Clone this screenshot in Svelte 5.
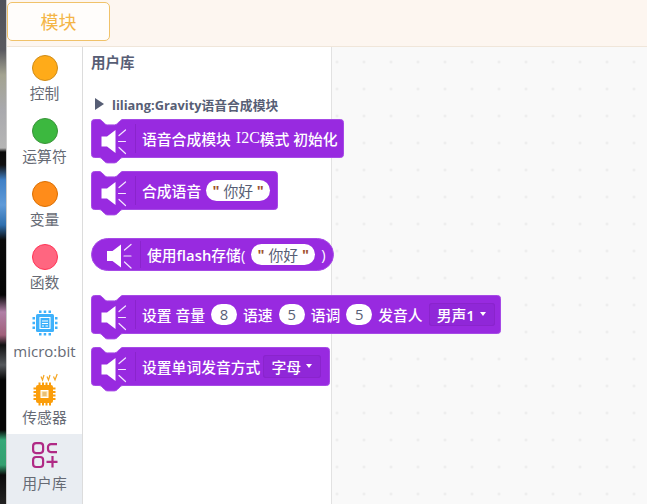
<script>
  // hat-less statement block outline, scratch style notch on top and bump under
  function stack(w, h) {
    const notch = 'c1.5,0 2.2,.7 3,1.4 l2.6,2.6 c.8,.8 1.5,1.4 3,1.4 h6.8 c1.5,0 2.2,-.6 3,-1.4 l2.6,-2.6 c.8,-.7 1.5,-1.4 3,-1.4';
    const bump = 'c-1.5,0 -2.2,.7 -3,1.4 l-2.6,2.6 c-.8,.8 -1.5,1.4 -3,1.4 h-6.8 c-1.5,0 -2.2,-.6 -3,-1.4 l-2.6,-2.6 c-.8,-.7 -1.5,-1.4 -3,-1.4';
    return `M.5,3.5 a3,3 0 0 1 3,-3 H8 ${notch} H${w - 3.5} a3,3 0 0 1 3,3 V${h - 3.5} a3,3 0 0 1 -3,3 H32 ${bump} H3.5 a3,3 0 0 1 -3,-3 Z`;
  }

  const cats = [
    { label: '控制', color: '#ffab19', edge: '#cf8b17' },
    { label: '运算符', color: '#3cb83f', edge: '#389438' },
    { label: '变量', color: '#ff8c1a', edge: '#db6e00' },
    { label: '函数', color: '#ff6680', edge: '#ff3355' }
  ];
</script>

{#snippet speaker(x, y)}
  <g transform="translate({x} {y})">
    <path class="spk" d="M0,17.500 h5.500 l8.500,-6.500 v23 l-8.500,-6.500 h-5.500 Z" />
    <path class="ray" d="M17.500,16.500 l6.500,-5.500 M17,22.500 h7 M17.500,28.500 l6.500,6" />
  </g>
{/snippet}

{#snippet stackBlock(w)}
  <svg class="shape" width={w} height="46" viewBox="0 0 {w} 46">
    <path class="body" d={stack(w, 39)} />
    {@render speaker(10.500, 0)}
    <path class="sep" d="M44.500,5 V34" />
  </svg>
{/snippet}

<div class="page">
  <div class="strip"></div>
  <div class="main">
    <header class="topbar">
      <div class="tab">模块</div>
    </header>

    <div class="content">
      <nav class="sidebar">
        {#each cats as c}
          <div class="cat">
            <span class="dot" style="background:{c.color};border-color:{c.edge}"></span>
            <span class="cat-label">{c.label}</span>
          </div>
        {/each}

        <div class="cat">
          <svg class="icon" width="30" height="30" viewBox="0 0 30 30">
            <g fill="#3fb1fb">
              <rect x="6" y="6" width="18" height="18" rx="1.500" />
              <path d="M9 2.500h2.500v2.500H9zM13.700 2.500h2.500v2.500h-2.500zM18.500 2.500H21v2.500h-2.500zM9 25h2.500v2.500H9zM13.700 25h2.500v2.500h-2.500zM18.500 25H21v2.500h-2.500zM2.500 9H5v2.500H2.500zM2.500 13.700H5v2.500H2.500zM2.500 18.500H5V21H2.500zM25 9h2.500v2.500H25zM25 13.700h2.500v2.500H25zM25 18.500h2.500V21H25z" />
            </g>
            <path d="M10 9.500h10v11H10zM12 13h6M12 15.500h6M12 18h2M15.500 18H18" fill="none" stroke="#fff" stroke-width="1.100" />
          </svg>
          <span class="cat-label latin">micro:bit</span>
        </div>

        <div class="cat sensor">
          <svg class="icon" width="30" height="36" viewBox="0 0 30 36">
            <path d="M11 4.500l1.500 3.500 1.500-5M17 4.500l1.500 3.500 1.500-5M23.500 4.500l1.500 3.500 2.200-6" fill="none" stroke="#f5a623" stroke-width="1.200" />
            <g fill="#fb9d0a">
              <rect x="6" y="13" width="17" height="18" rx="2" />
              <path d="M8.500 10.500h2v2.500h-2zM12 10.500h2v2.500h-2zM15.500 10.500h2v2.500h-2zM19 10.500h2v2.500h-2zM8.500 31h2v2.500h-2zM12 31h2v2.500h-2zM15.500 31h2v2.500h-2zM19 31h2v2.500h-2zM3.500 15.500H6v2H3.500zM3.500 19H6v2H3.500zM3.500 22.500H6v2H3.500zM3.500 26H6v2H3.500zM23 15.500h2.500v2H23zM23 19h2.500v2H23zM23 22.500h2.500v2H23zM23 26h2.500v2H23z" />
            </g>
            <rect x="11" y="18.500" width="7" height="7" fill="#fde3b0" stroke="#fff" stroke-width="1" />
            <path d="M12.500 21h4M12.500 23h4" stroke="#c98a20" stroke-width=".8" />
          </svg>
          <span class="cat-label">传感器</span>
        </div>

        <div class="cat active">
          <svg class="icon" width="28" height="28" viewBox="0 0 28 28">
            <g fill="none" stroke="#b02a85" stroke-width="2.200">
              <rect x="2.100" y="2.100" width="10" height="10" rx="3" />
              <rect x="2.100" y="16" width="10" height="10" rx="3" />
              <path d="M26 3.100h-6a3 3 0 0 0-3 3v2a3 3 0 0 0 3 3h6" />
              <path d="M21.500 15v11.500M15.500 20.800h11" />
            </g>
          </svg>
          <span class="cat-label">用户库</span>
        </div>
      </nav>

      <section class="palette">
        <h2 class="title">用户库</h2>
        <div class="group">
          <span class="tri"></span>
          <span class="group-name">liliang:Gravity语音合成模块</span>
        </div>

        <div class="block b1">
          {@render stackBlock(253)}
          <div class="row">语音合成模块 <span class="serif">I2C</span>模式 初始化</div>
        </div>

        <div class="block b2">
          {@render stackBlock(187)}
          <div class="row">合成语音 <span class="pill str"><i>"</i> 你好 <i>"</i></span></div>
        </div>

        <div class="block reporter">
          <svg class="shape" width="243" height="33" viewBox="0 0 243 33">
            <rect x=".5" y=".5" width="242" height="32" rx="16" class="body" />
            {@render speaker(16, -4.500)}
            <path class="sep" d="M49.500,3 V30" />
          </svg>
          <div class="row"><span>使用<em>flash</em>存储(</span> <span class="pill str"><i>"</i> 你好 <i>"</i></span> <span>)</span></div>
        </div>

        <div class="block b4">
          {@render stackBlock(410)}
          <div class="row">
            设置 音量 <span class="pill num">8</span> 语速 <span class="pill num">5</span> 语调 <span class="pill num">5</span> 发音人 <span class="drop"><span>男声<em>1</em></span> <b></b></span>
          </div>
        </div>

        <div class="block b5">
          {@render stackBlock(239)}
          <div class="row">设置单词发音方式 <span class="drop">字母 <b></b></span></div>
        </div>
      </section>

      <div class="workspace"></div>
    </div>
  </div>
</div>

<style>
  :global(body) {
    margin: 0;
    overflow: hidden;
    font-family: "Open Sans", "Noto Sans CJK SC", sans-serif;
  }

  .page {
    display: flex;
    width: 647px;
    height: 504px;
    overflow: hidden;
    background: #fff;
  }

  /* the blurred window behind the app */
  .strip {
    flex: none;
    width: 6px;
    margin-right: 1px;
    background: linear-gradient(to bottom, #50525a 0, #5a5a60 50px, #a3a391 75px, #a9a9ad 110px, #b5b5b5 148px, #0a0a0a 152px, #111 165px, #3f80c6 180px, #5f9ad8 205px, #2f6fae 225px, #0a0a0a 240px, #050505 295px, #b07fa6 312px, #a0607a 335px, #111 345px, #55585c 365px, #050505 380px, #050505 430px, #36a878 440px, #34a070 465px, #0a0a0a 475px, #222 504px);
    box-shadow: 1px 0 0 #c9c9c9;
  }

  .main {
    flex: 1;
    min-width: 0;
    display: flex;
    flex-direction: column;
  }

  .topbar {
    flex: none;
    height: 47px;
    box-sizing: border-box;
    padding-top: 2px;
    background: #fdf6f0;
    border-bottom: 1px solid #f0e6da;
  }

  .tab {
    width: 103px;
    height: 39px;
    box-sizing: border-box;
    border: 1px solid #f0c26a;
    border-radius: 5px;
    background: #fffdfb;
    color: #f4b546;
    font-size: 18px;
    line-height: 38px;
    text-align: center;
  }

  .content {
    flex: 1;
    display: flex;
    min-height: 0;
  }

  .sidebar {
    flex: none;
    width: 75px;
    border-right: 1px solid #dcdcdc;
    background: #fff;
    display: flex;
    flex-direction: column;
    padding-top: 8px;
  }

  .cat {
    height: 63px;
    display: flex;
    flex-direction: column;
    align-items: center;
  }

  .dot {
    width: 24px;
    height: 24px;
    border: 1px solid;
    border-radius: 50%;
    margin-bottom: 2px;
  }

  .icon {
    display: block;
    margin-top: 1px;
  }

  .cat-label {
    font-size: 14.800px;
    line-height: 20px;
    color: #666a74;
  }

  .cat-label.latin {
    font-size: 15px;
    margin-top: 3px;
  }

  .sensor {
    height: 64px;
    margin-top: 3px;
  }

  .sensor .icon {
    margin-top: -1px;
    margin-bottom: -1px;
  }

  .active {
    flex: 1;
    background: #e9edf2;
    margin-top: -3px;
    padding-top: 6px;
  }

  .active .cat-label {
    margin-top: 4px;
  }

  .palette {
    flex: none;
    width: 249px;
    box-sizing: border-box;
    background: #fff;
    border-right: 1px solid #e2e2e2;
    padding: 7px 0 0 8px;
  }

  .title {
    margin: 0;
    font-size: 14.500px;
    line-height: 18px;
    font-weight: 700;
    color: #575e75;
  }

  .group {
    display: flex;
    align-items: center;
    gap: 8px;
    margin: 23px 0 0 4px;
    height: 18px;
    font-size: 12.800px;
    font-weight: 700;
    color: #575e75;
  }

  .tri {
    width: 0;
    height: 0;
    border-left: 9px solid #575e75;
    border-top: 6.500px solid transparent;
    border-bottom: 6.500px solid transparent;
  }

  .block {
    position: relative;
    height: 46px;
  }

  .b1 { margin-top: 6px; }
  .b2 { margin-top: 6px; }
  .reporter { margin-top: 21px; height: 33px; }
  .b4 { margin-top: 24px; }
  .b5 { margin-top: 6px; }

  .shape {
    position: absolute;
    left: 0;
    top: 0;
    display: block;
  }

  .body {
    fill: #982ae0;
    stroke: #a64ae6;
    stroke-width: 1;
  }

  .spk {
    fill: #fff;
  }

  .ray {
    fill: none;
    stroke: #f4e6ff;
    stroke-width: 1.200;
    stroke-linecap: round;
  }

  .sep {
    stroke: #8a24cc;
    stroke-width: 1;
  }

  .row {
    position: relative;
    display: flex;
    align-items: center;
    gap: 6px;
    width: max-content;
    height: 38px;
    padding-left: 51px;
    font-size: 14.800px;
    font-weight: 500;
    color: #fff;
    white-space: nowrap;
  }

  .row em {
    font-style: normal;
    font-weight: 600;
  }

  .reporter .row {
    height: 32px;
    padding-left: 56px;
  }

  .serif {
    font-family: "Liberation Serif", serif;
    font-size: 16px;
    font-weight: 400;
    margin-left: -1px;
    margin-right: -6px;
  }

  .pill {
    display: inline-flex;
    align-items: center;
    justify-content: center;
    flex: none;
    height: 21px;
    border-radius: 10.500px;
    background: #fff;
    color: #575e75;
    font-weight: 400;
  }

  .str {
    width: 64px;
    white-space: pre;
  }

  .b2 .str {
    margin-left: -1px;
  }

  .str i {
    font-style: normal;
    font-weight: 700;
    color: #a0522d;
  }

  .num {
    width: 26px;
  }

  .drop {
    display: inline-flex;
    align-items: center;
    gap: 5px;
    height: 23px;
    padding: 0 9px 0 8px;
    border-radius: 3px;
    background: #9027d8;
    box-shadow: inset 0 0 0 1px #8a24cc;
    white-space: nowrap;
  }

  .b5 .drop {
    margin-left: -3px;
  }

  .drop b {
    width: 0;
    height: 0;
    border-top: 4px solid #fff;
    border-left: 3.500px solid transparent;
    border-right: 3.500px solid transparent;
  }

  .workspace {
    flex: 1;
    background-color: #f9f9f9;
    background-image: radial-gradient(circle at 50% 50%, #ebebeb 0, #ebebeb 1px, transparent 1.500px);
    background-size: 27px 27px;
    background-position: -8.500px 1.500px;
  }
</style>
